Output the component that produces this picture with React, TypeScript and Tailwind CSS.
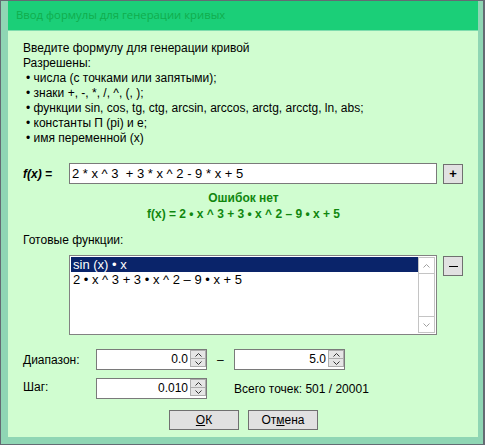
// Диалог ввода формулы — окно в стиле Windows с зелёной темой.
const FONT = "font-['Liberation_Sans',Arial,sans-serif]";

function Chevron({ up, className }: { up?: boolean; className?: string }) {
  return (
    <svg width="7" height="4" viewBox="0 0 7 4" className={className}>
      <polyline
        points={up ? "0.5,3.5 3.5,0.5 6.5,3.5" : "0.5,0.5 3.5,3.5 6.5,0.5"}
        fill="none"
        stroke="currentColor"
        strokeWidth="1"
      />
    </svg>
  );
}

function SpinEdit({ value }: { value: string }) {
  return (
    <div className="flex h-[21px] w-[111px] items-start border border-[#7a7a7a] bg-white">
      <div className="flex-1 pr-[2px] text-right leading-[18px]">{value}</div>
      <div className="flex h-[17px] w-[16px] flex-col">
        <div className="flex h-[9px] items-center justify-center border border-[#adadad] bg-[#e5e5e5] text-[#333]">
          <Chevron up />
        </div>
        <div className="-mt-px flex h-[9px] items-center justify-center border border-[#adadad] bg-[#e5e5e5] text-[#333]">
          <Chevron />
        </div>
      </div>
    </div>
  );
}

export default function App() {
  return (
    <div
      className={`h-[445px] w-[485px] border-b border-l border-r-2 border-t border-[#646b73] bg-[#8fd6b4] pb-[7px] pl-[7px] pr-[5px] ${FONT}`}
    >
      {/* заголовок */}
      <div className="flex h-[30px] items-center border-b border-[#7edcae] bg-[#1bcf78] pl-[8px] font-['Open_Sans',sans-serif] text-[11.3px] text-[#10ad4c]">
        Ввод формулы для генерации кривых
      </div>

      <div className="flex h-[406px] flex-col bg-[#d0fdd0] pl-[15px] pr-[14px] pt-[10px] text-[12px] text-black">
        <div className="leading-[15px]">
          <div>Введите формулу для генерации кривой</div>
          <div>Разрешены:</div>
          <div className="pl-[3px]">• числа (с точками или запятыми);</div>
          <div className="pl-[3px]">• знаки +, -, *, /, ^, (, );</div>
          <div className="pl-[3px]">• функции sin, cos, tg, ctg, arcsin, arccos, arctg, arcctg, ln, abs;</div>
          <div className="pl-[3px]">• константы П (pi) и e;</div>
          <div className="pl-[3px]">• имя переменной (x)</div>
        </div>

        {/* строка формулы */}
        <div className="mt-[17px] flex items-center">
          <div className="w-[46px] font-bold italic">f(x) =</div>
          <div className="flex h-[21px] w-[368px] items-center border border-[#7a7a7a] bg-white pl-[2px] text-[13px] whitespace-pre">
            {"2 * x ^ 3  + 3 * x ^ 2 - 9 * x + 5"}
          </div>
          <button className="ml-[6px] flex h-[20px] w-[20px] items-center justify-center border border-[#707070] bg-[#e1e1e1] text-[13px] font-bold leading-none">
            +
          </button>
        </div>

        <div className="mt-[6px] text-center font-bold leading-[16px] text-[#10870f]">
          <div>Ошибок нет</div>
          <div>f(x) = 2 • x ^ 3 + 3 • x ^ 2 – 9 • x + 5</div>
        </div>

        <div className="mt-[11px] leading-[15px]">Готовые функции:</div>

        {/* список готовых функций */}
        <div className="mt-[7px] flex items-start pl-[46px]">
          <div className="flex h-[80px] w-[368px] border border-[#828282] bg-white p-px text-[13px]">
            <div className="flex-1">
              <div className="h-[15px] bg-[#0a246a] pl-[2px] leading-[15px] text-white">sin (x) • x</div>
              <div className="h-[15px] pl-[2px] leading-[15px]">2 • x ^ 3 + 3 • x ^ 2 – 9 • x + 5</div>
            </div>
            <div className="flex w-[17px] flex-col border border-[#c4c4c4] text-[#a0a0a0]">
              <div className="flex h-[16px] items-center justify-center border-b border-[#c4c4c4]">
                <Chevron up />
              </div>
              <div className="flex-1" />
              <div className="flex h-[16px] items-center justify-center border-t border-[#c4c4c4]">
                <Chevron />
              </div>
            </div>
          </div>
          <button className="ml-[6px] mt-px flex h-[20px] w-[20px] items-center justify-center border border-[#707070] bg-[#e1e1e1]">
            <span className="block h-px w-[9px] bg-black" />
          </button>
        </div>

        {/* диапазон */}
        <div className="mt-[14px] flex items-center">
          <div className="w-[73px]">Диапазон:</div>
          <SpinEdit value="0.0" />
          <div className="w-[27px] pl-[10px]">–</div>
          <SpinEdit value="5.0" />
        </div>

        <div className="mt-[8px] flex items-center">
          <div className="w-[73px] -translate-y-[2px]">Шаг:</div>
          <SpinEdit value="0.010" />
          <div className="pl-[27px]">Всего точек: 501 / 20001</div>
        </div>

        <div className="mt-[11px] flex justify-center gap-[9px]">
          <button className="h-[20px] w-[70px] border border-[#707070] bg-[#e1e1e1] leading-none">
            <span className="underline">О</span>К
          </button>
          <button className="h-[20px] w-[70px] border border-[#707070] bg-[#e1e1e1] leading-none">
            От<span className="underline">м</span>ена
          </button>
        </div>
      </div>
    </div>
  );
}
